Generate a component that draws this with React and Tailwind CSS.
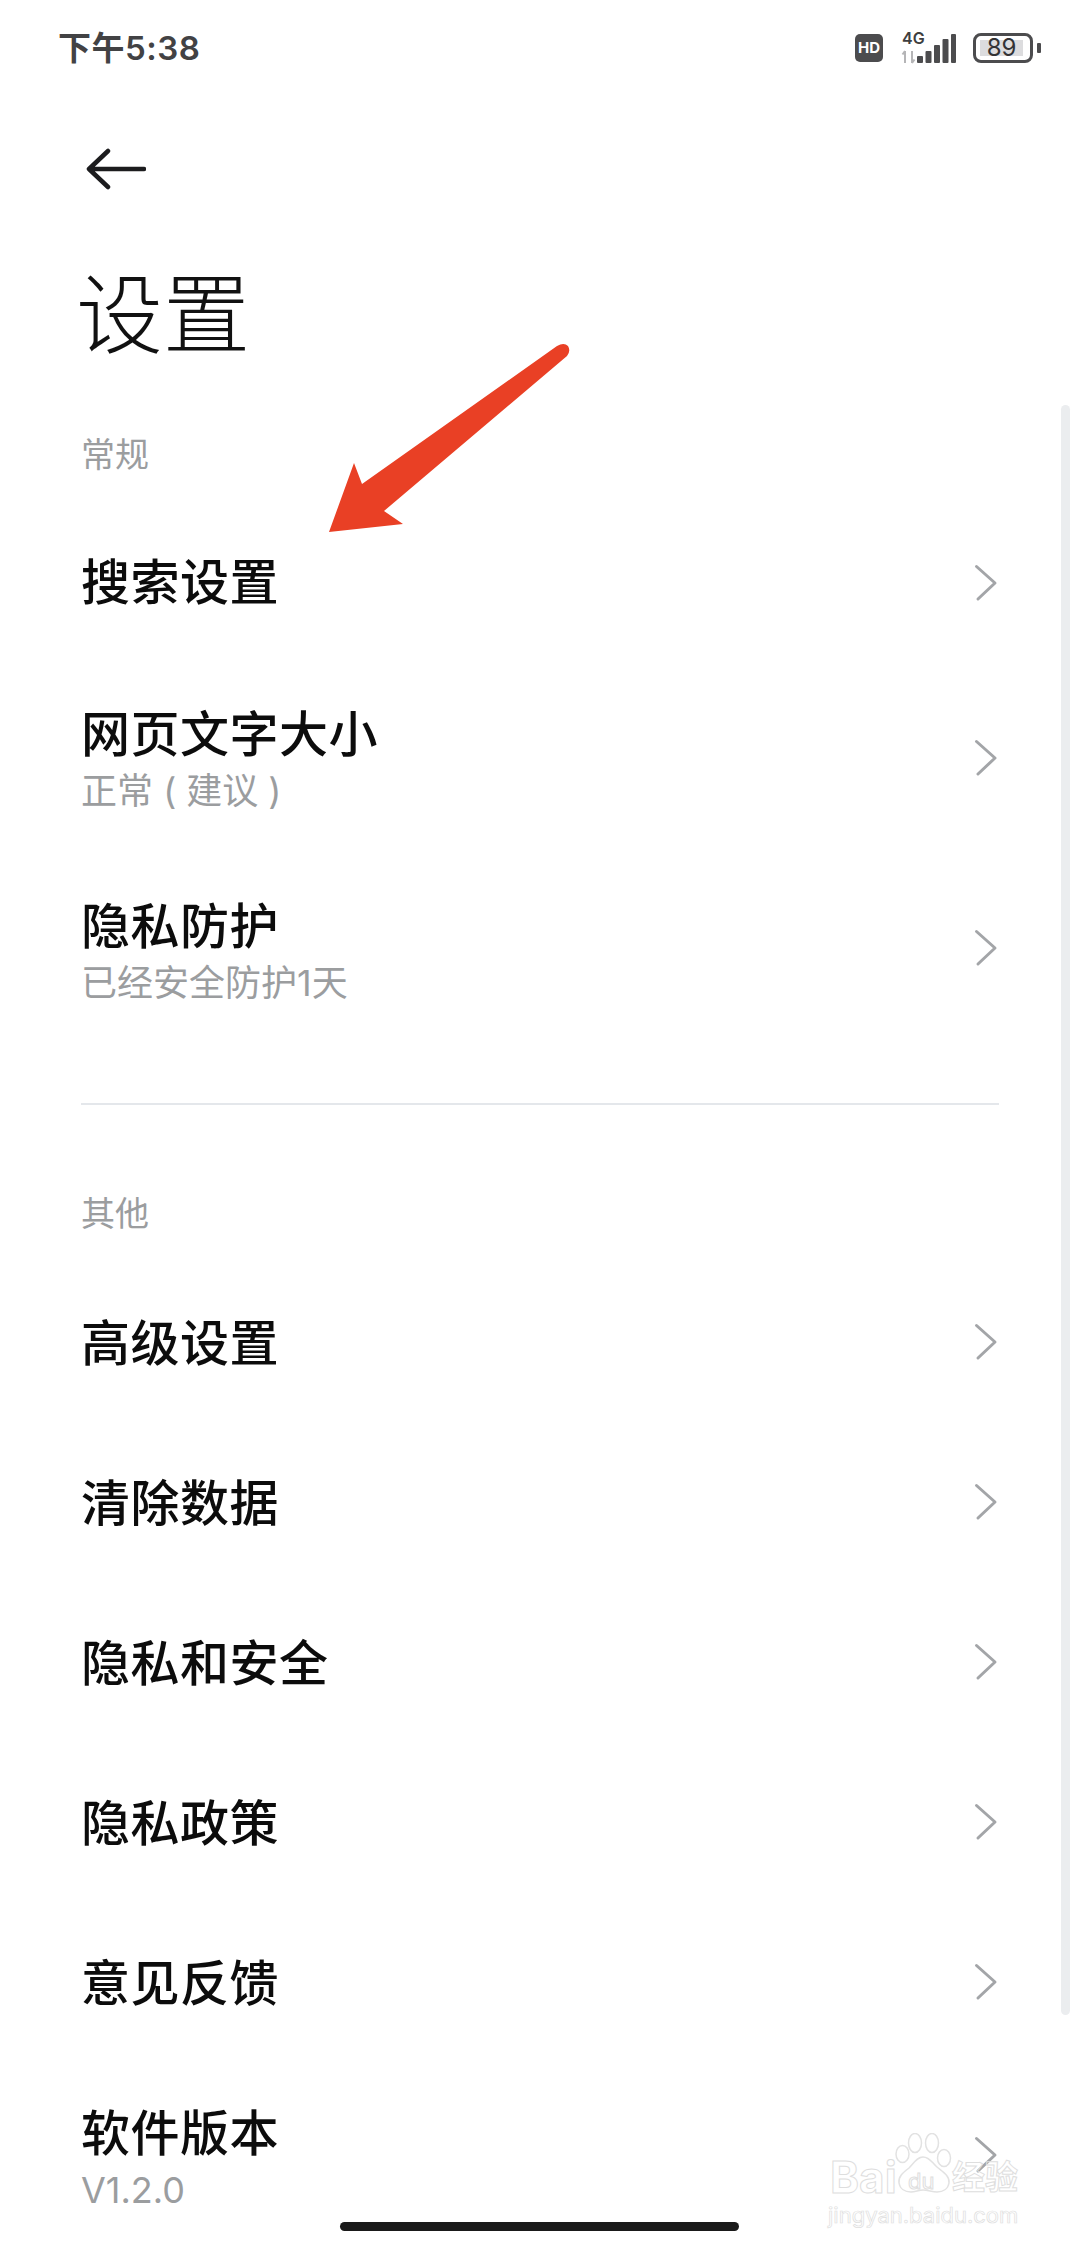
import React from 'react';

const font = 'font-["Inter","Noto_Sans_CJK_SC",sans-serif]';

const Chevron = ({ className = '' }) => (
  <svg width="24" height="38" viewBox="0 0 24 38" fill="none" className={`shrink-0 ${className}`}>
    <path d="M2.5 2.5 L21 19 L4 35" stroke="#a3a5a8" strokeWidth="3" strokeLinecap="round" strokeLinejoin="round" />
  </svg>
);

const Row = ({ title, sub, className, chevron }) => (
  <div className={`flex items-center justify-between pl-[81px] pr-[82px] ${className}`}>
    <div className="flex flex-col">
      <span className="text-[49px] leading-[60px] font-medium text-[#0c0c0c] tracking-[0.5px]">{title}</span>
      {sub && <span className="text-[36px] leading-[48px] text-[#9b9d9f] mt-[2px]">{sub}</span>}
    </div>
    <Chevron className={chevron} />
  </div>
);

const StatusIcons = () => (
  <div className="flex items-center">
    <div className="w-[28px] h-[28px] rounded-[5px] bg-[#4c4c4e] text-white text-[15px] font-bold leading-[28px] text-center">HD</div>
    <div className="ml-[18px] w-[58px] h-[32px] relative">
      <span className="absolute left-[1px] top-[-2px] text-[16px] leading-[16px] font-semibold text-[#3e3e40]">4G</span>
      <svg width="58" height="32" viewBox="0 0 58 32">
        <path d="M4 31V19M4 19l-2.500 3.500M11 19v12M11 31l2.500-3.500" stroke="#b5b5b7" strokeWidth="2" fill="none" />
        <rect x="16" y="24" width="6" height="7" rx="1" fill="#4c4c4e" />
        <rect x="24.500" y="19" width="6" height="12" rx="1" fill="#4c4c4e" />
        <rect x="33" y="13" width="6" height="18" rx="1" fill="#4c4c4e" />
        <rect x="41.500" y="7" width="6" height="24" rx="1" fill="#4c4c4e" />
        <rect x="50" y="2" width="5" height="29" rx="1" fill="#4c4c4e" />
      </svg>
    </div>
    <div className="ml-[14px] w-[60px] h-[30px] rounded-[8px] border-[3px] border-[#4c4c4e] p-[4px]">
      <div className="w-[43px] h-full bg-[#dcdcde] flex items-center justify-center text-[24px] leading-none text-[#333335]">89</div>
    </div>
    <div className="ml-[4px] w-[4px] h-[10px] rounded-[1px] bg-[#4c4c4e]" />
  </div>
);

const Watermark = () => (
  <div className="absolute left-[846px] top-[2128px] w-[190px] h-[110px]">
    <svg width="58" height="60" viewBox="0 0 58 60" fill="none" stroke="#e2e2e2" strokeWidth="1.500" className="absolute left-[49px] top-[5px]">
      <ellipse cx="7.500" cy="21" rx="6.500" ry="8.500" />
      <ellipse cx="20" cy="10" rx="6.500" ry="9.500" />
      <ellipse cx="37" cy="10" rx="6.500" ry="9.500" />
      <ellipse cx="49" cy="25" rx="6.500" ry="8.500" />
      <path d="M28 24c-6 0-9 6-14 11-5 4-11 8-10 15 1 6 6 9 12 9 4 0 8-2 12-2 5 0 9 2 14 2 6 0 11-3 12-9 1-7-6-11-12-16-5-4-7-10-14-10z" />
    </svg>
    <span className="absolute left-[-16px] top-[24px] text-[44px] leading-[50px] font-bold text-transparent [-webkit-text-stroke:1px_#dedede]">Bai</span>
    <span className="absolute left-[62px] top-[41px] text-[22px] leading-[24px] text-transparent [-webkit-text-stroke:1px_#dedede]">du</span>
    <span className="absolute left-[106px] top-[30px] text-[33px] leading-[38px] font-bold text-transparent [-webkit-text-stroke:1px_#dedede]">经验</span>
    <span className="absolute left-[-18px] top-[75px] text-[22px] leading-[24px] text-transparent [-webkit-text-stroke:0.7px_#dedede]">jingyan.baidu.com</span>
  </div>
);

export default function App() {
  return (
    <div className={`relative w-[1080px] h-[2248px] overflow-hidden bg-white ${font}`}>
      {/* status bar */}
      <div className="h-[96px] flex items-center justify-between pl-[58px] pr-[39px]">
        <span className="text-[33px] leading-none font-semibold text-[#424244] tracking-[0.5px]">下午5:38</span>
        <StatusIcons />
      </div>

      <div className="h-[146px] pl-[86px] flex items-center">
        <svg width="60" height="42" viewBox="0 0 60 42" fill="none">
          <path d="M58 21H3M22 3L3 21l19 18" stroke="#1c1c1e" strokeWidth="4.500" strokeLinecap="round" strokeLinejoin="round" />
        </svg>
      </div>

      <h1 className="mt-[24px] h-[100px] pl-[76px] text-[87px] leading-[100px] font-light text-[#111]">设置</h1>

      <div className="mt-[64px] h-[73px] pl-[81px] text-[34px] leading-[50px] text-[#9b9d9f]">常规</div>
      <Row title="搜索设置" className="h-[160px]" />
      <Row
        title="网页文字大小"
        sub={<>正常 (<span className="mx-[10px]">建议</span>)</>}
        className="h-[193px]"
        chevron="mb-[4px]"
      />
      <Row title="隐私防护" sub="已经安全防护1天" className="h-[192px]" chevron="mb-[9px]" />

      <div className="mt-[55px] mx-[81px] h-[2px] bg-[#e4e7eb]" />

      <div className="mt-[84px] h-[75px] pl-[81px] text-[34px] leading-[50px] text-[#9b9d9f]">其他</div>
      <Row title="高级设置" className="h-[160px]" chevron="mb-[5px]" />
      <Row title="清除数据" className="h-[160px]" chevron="mb-[5px]" />
      <Row title="隐私和安全" className="h-[160px]" chevron="mb-[5px]" />
      <Row title="隐私政策" className="h-[160px]" chevron="mb-[5px]" />
      <Row title="意见反馈" className="h-[160px]" chevron="mb-[5px]" />
      <Row title="软件版本" sub="V1.2.0" className="h-[190px]" chevron="mb-[9px]" />

      {/* scrollbar */}
      <div className="absolute left-[1061px] top-[405px] w-[9px] h-[1610px] rounded-full bg-[#ebedef]" />

      {/* annotation arrow */}
      <svg className="absolute left-[320px] top-[335px]" width="260" height="205" viewBox="320 335 260 205">
        <path d="M329 532 L354 463 L362 484 L557 346 Q564 342 568 346 Q571 351 567 356 L384 511 L403 524 Z" fill="#e94025" />
      </svg>

      <Watermark />

      {/* home indicator */}
      <div className="absolute left-[340px] top-[2222px] w-[399px] h-[9px] rounded-full bg-[#1a1a1a]" />
    </div>
  );
}
